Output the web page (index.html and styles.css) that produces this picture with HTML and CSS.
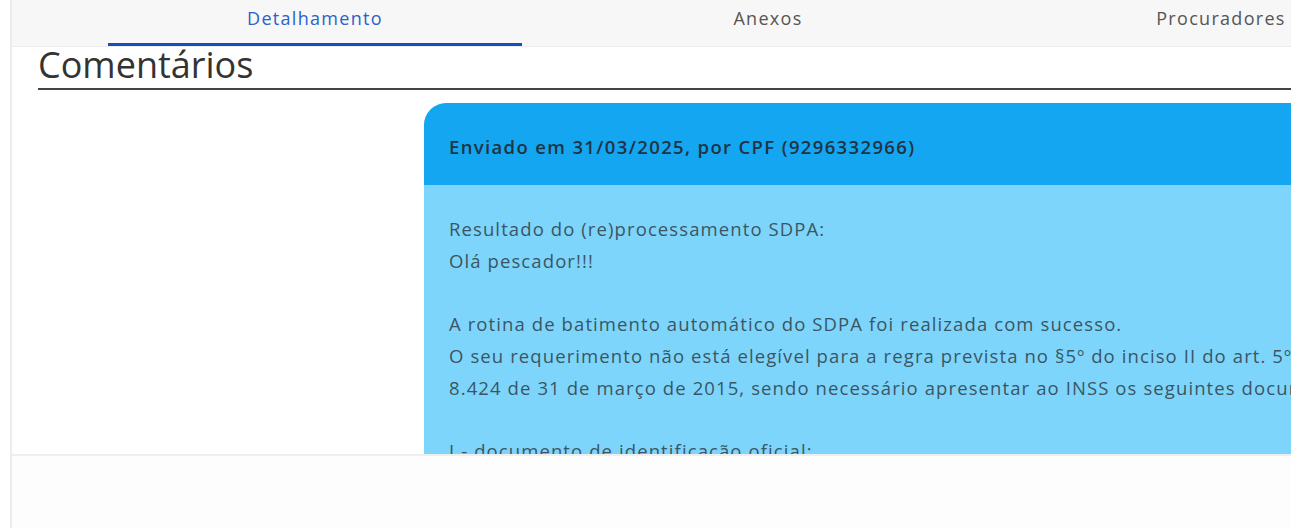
FILE: index.html
```html
<!DOCTYPE html>
<html lang="pt-BR">
<head>
<meta charset="utf-8">
<title>Comentários</title>
<link rel="stylesheet" href="styles.css">
</head>
<body>
<div class="frame">
  <div class="panel">
    <nav class="tabs">
      <a class="tab active">Detalhamento</a>
      <a class="tab">Anexos</a>
      <a class="tab">Procuradores</a>
    </nav>
    <main class="content">
      <h2 class="title">Comentários</h2>
      <section class="card">
        <header class="card-head">Enviado em 31/03/2025, por CPF (9296332966)</header>
        <div class="card-body">
          <p class="line">Resultado do (re)processamento SDPA:</p>
          <p class="line">Olá pescador!!!</p>
          <p class="line blank">&nbsp;</p>
          <p class="line">A rotina de batimento automático do SDPA foi realizada com sucesso.</p>
          <p class="line">O seu requerimento não está elegível para a regra prevista no §5º do inciso II do art. 5º do Decreto nº</p>
          <p class="line">8.424 de 31 de março de 2015, sendo necessário apresentar ao INSS os seguintes documentos:</p>
          <p class="line blank">&nbsp;</p>
          <p class="line">I - documento de identificação oficial;</p>
          <p class="line">II - comprovante de residência;</p>
        </div>
      </section>
    </main>
    <footer class="footer"></footer>
  </div>
</div>
</body>
</html>
```

FILE: styles.css
```css
html, body {
  margin: 0;
  padding: 0;
  background: #ffffff;
  overflow: hidden;
}

body {
  font-family: "Open Sans", "Liberation Sans", sans-serif;
  color: #333;
}

.frame {
  display: flex;
  height: 528px;
  padding-left: 10px;
}

.panel {
  flex: 1;
  display: flex;
  flex-direction: column;
  border-left: 2px solid #ececec;
  min-width: 0;
}

.tabs {
  display: flex;
  gap: 39px;
  height: 46px;
  padding-left: 96px;
  background: #f7f7f7;
  border-bottom: 1px solid #ececec;
  flex-shrink: 0;
}

.tab {
  flex: 0 0 414px;
  display: flex;
  align-items: center;
  justify-content: center;
  font-size: 18px;
  letter-spacing: 1.3px;
  color: #555;
  box-sizing: border-box;
  border-bottom: 3px solid transparent;
  padding-bottom: 8px;
  white-space: nowrap;
}

.tab.active {
  color: #2a62c9;
  border-bottom-color: #1351b4;
}

.content {
  height: 407px;
  overflow: hidden;
  padding-left: 26px;
  flex-shrink: 0;
}

.title {
  margin: 0;
  font-size: 36px;
  font-weight: 400;
  line-height: 35px;
  color: #333;
  padding-bottom: 6px;
  border-bottom: 2px solid #444;
}

.card {
  margin: 13px 0 0 386px;
  width: 1200px;
}

.card-head {
  height: 82px;
  display: flex;
  align-items: center;
  padding-left: 25px;
  padding-top: 4px;
  box-sizing: border-box;
  background: #14a6f0;
  border-top-left-radius: 22px;
  font-size: 18.5px;
  font-weight: 600;
  letter-spacing: 1.35px;
  color: #1f3444;
}

.card-body {
  background: #7ed5fb;
  padding: 28px 25px;
  font-size: 18.5px;
  letter-spacing: 1.1px;
  line-height: 31.7px;
  color: #3b5563;
}

.line {
  margin: 0;
  white-space: nowrap;
}

.footer {
  flex: 1;
  background: #fdfdfd;
  border-top: 2px solid #eeeeee;
}
```
